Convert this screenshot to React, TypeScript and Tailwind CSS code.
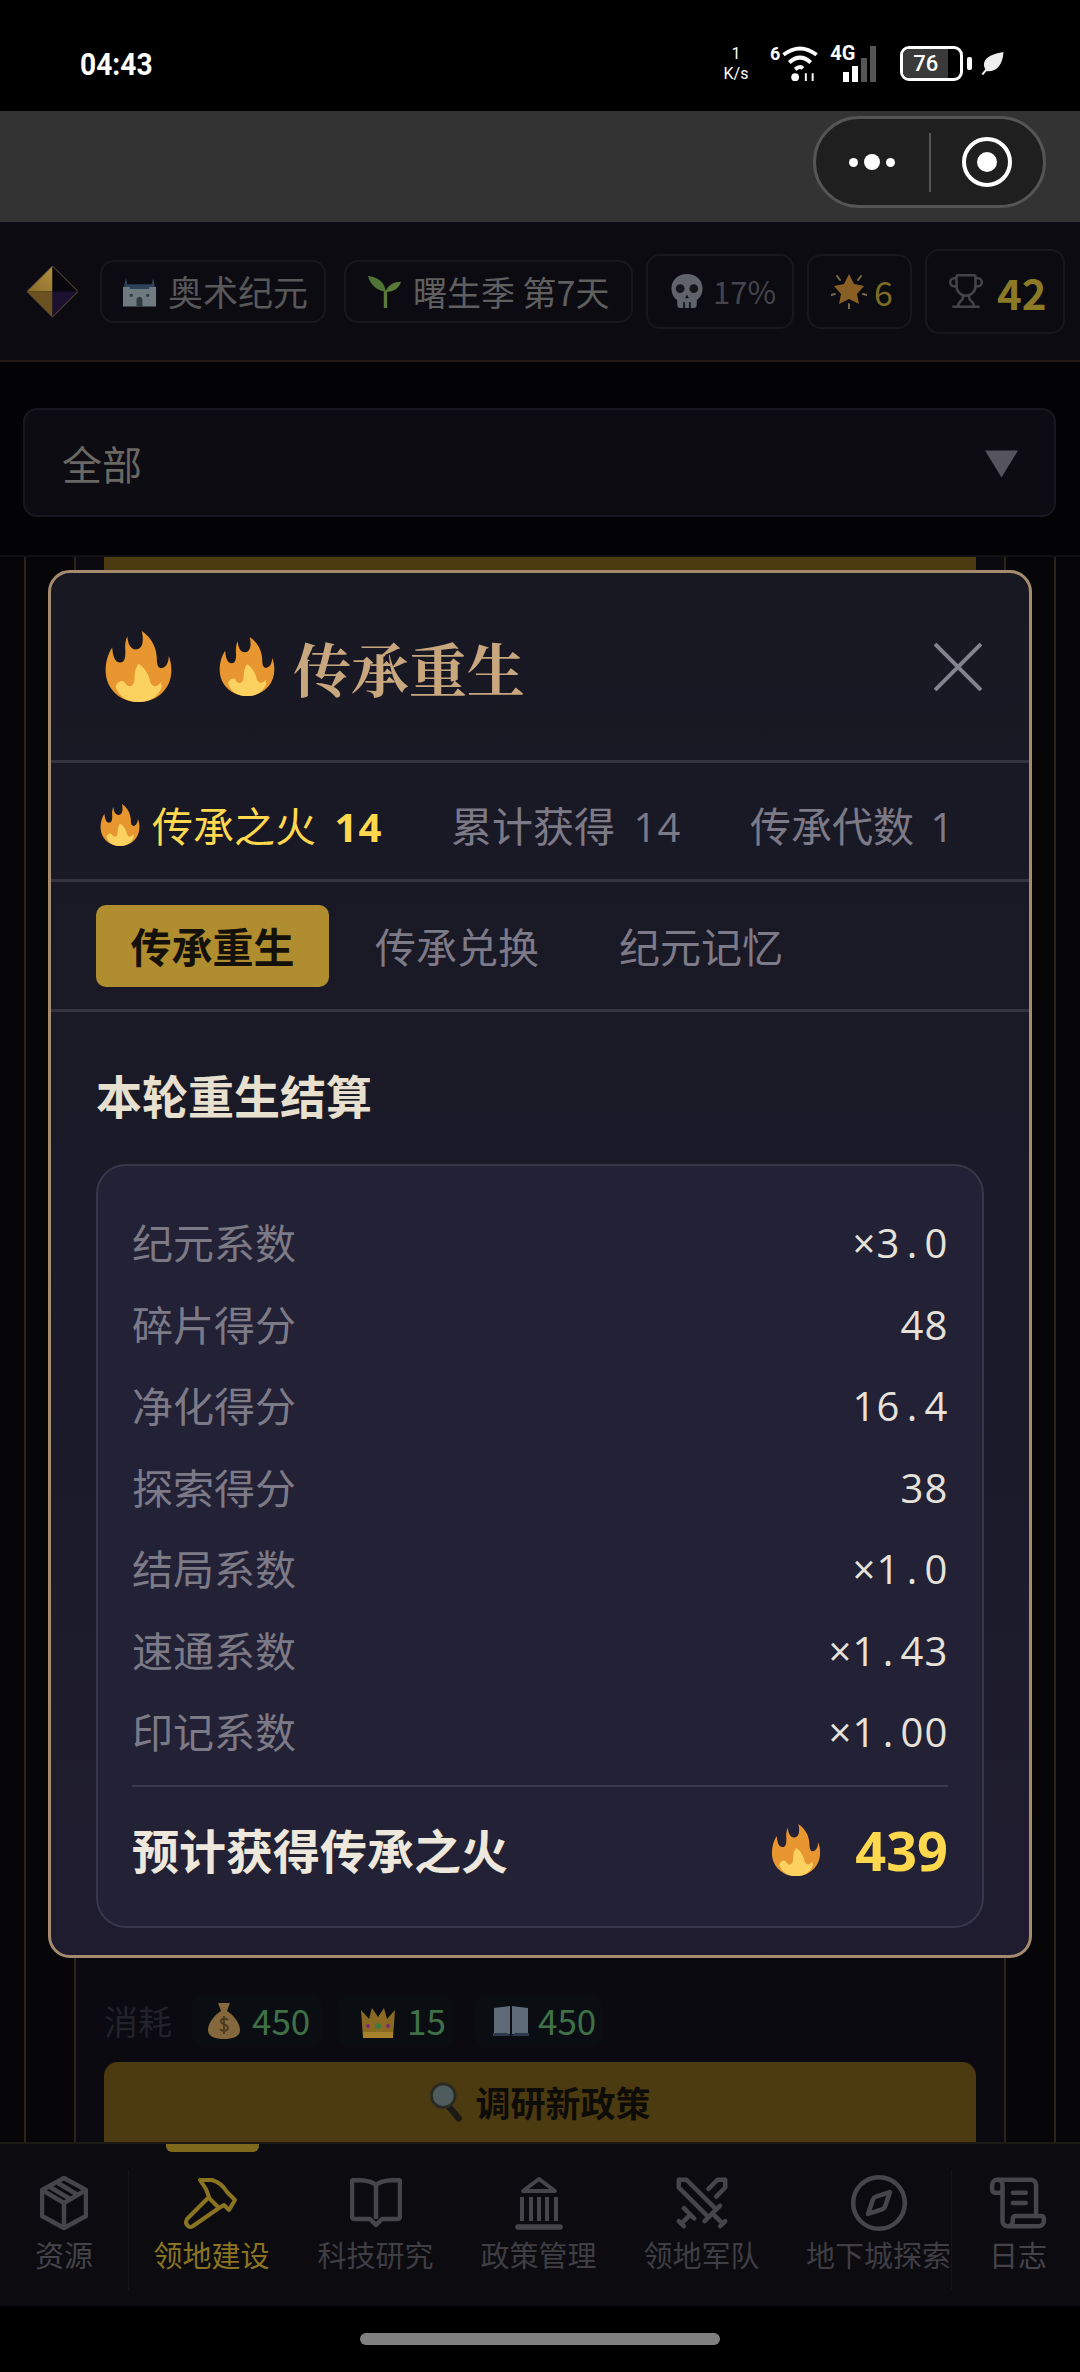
import { Compass, ScrollText, Swords, Trophy } from "lucide-react";

const Flame = ({ className }: { className: string }) => (
  <svg viewBox="0 0 100 108" className={className}>
    <path
      fill="#e8962f"
      d="M50 108C22 108 0 88 0 60C0 46 4 34 10 25C11 38 14 48 22 48C30 48 30 38 30 30C29 22 30 14 33 8C34 20 38 28 46 28C55 28 59 18 55 0C72 12 78 28 78 44C78 54 82 58 87 56C93 54 96 46 96 38C99 45 100 52 100 60C100 88 78 108 50 108Z"
    />
    <path
      fill="#fbd160"
      d="M50 108C32 108 20 100 15 84C20 74 28 74 30 80C36 88 44 84 44 72C44 62 46 56 50 50C58 54 66 66 68 78C72 86 78 86 84 78C84 80 86 84 85 86C80 100 68 108 50 108Z"
    />
  </svg>
);

const Castle = () => (
  <svg viewBox="0 0 36 32" className="w-[35px] h-[32px]">
    <path fill="#2d4258" d="M2 12L4 2L6 12ZM30 12L32 2L34 12ZM4 9H32V15H4Z" />
    <path fill="#6f7a80" d="M1 12H8V14H28V12H35V32H1Z" />
    <path fill="#2f3a42" d="M15 32V24Q18 20 21 24V32ZM8 19H11V22H8ZM25 19H28V22H25Z" />
  </svg>
);

const Sprout = () => (
  <svg viewBox="0 0 34 34" className="w-[33px] h-[33px]">
    <path fill="none" stroke="#5a7a3c" strokeWidth="3.5" d="M18 34V16" />
    <path fill="#4f7434" d="M18 17C18 8 10 2 0 1C2 9 8 16 18 17Z" />
    <path fill="#5a7a3c" d="M18 17C21 10 27 7 34 7C32 14 26 18 18 17Z" />
  </svg>
);

const Skull = () => (
  <svg viewBox="0 0 32 36" className="w-[32px] h-[35px]">
    <path fill="#60646a" d="M16 0C7 0 0 6 0 15C0 21 3 25 6 27V32Q6 35 9 35H23Q26 35 26 32V27C29 25 32 21 32 15C32 6 25 0 16 0Z" />
    <circle cx="9" cy="15" r="4.5" fill="#15151a" />
    <circle cx="23" cy="15" r="4.5" fill="#15151a" />
    <path fill="#15151a" d="M14 25L16 21L18 25ZM12 29H14V35H12ZM18 29H20V35H18Z" />
  </svg>
);

const Star = () => (
  <svg viewBox="0 0 36 36" className="w-[36px] h-[36px]">
    <path fill="#8a5f24" d="M18 1L23 11L33 13L26 21L28 31L18 26L8 31L10 21L3 13L13 11Z" />
    <path stroke="#7a6a48" strokeWidth="2" strokeLinecap="round" d="M6 3L9 7M30 3L27 7M0 22L4 21M36 22L32 21M18 31V36" />
  </svg>
);

const MoneyBag = () => (
  <svg viewBox="0 0 32 36" className="w-[32px] h-[36px] shrink-0">
    <path fill="#85683d" d="M10 0H22L19 8C27 13 32 21 32 27C32 33 26 36 16 36C6 36 0 33 0 27C0 21 5 13 13 8Z" />
    <path fill="none" stroke="#4d3b20" strokeWidth="2" d="M20 17C17 14 12 16 13 19C14 22 20 21 20 25C20 28 14 29 12 26M16 13V31" />
  </svg>
);

const Crown = () => (
  <svg viewBox="0 0 36 34" className="w-[36px] h-[34px] shrink-0">
    <path fill="#8a6a22" d="M1 6L9 15L12 4L18 13L24 4L27 15L35 6L33 34H3Z" />
    <path fill="#a8812c" d="M3 28H33V34H3Z" />
    <circle cx="8" cy="22" r="2" fill="#7a2a7a" />
    <circle cx="18" cy="22" r="3" fill="#3f7a3f" />
    <circle cx="28" cy="22" r="2" fill="#7a2a7a" />
  </svg>
);

const OpenBook = () => (
  <svg viewBox="0 0 36 30" className="w-[36px] h-[30px] shrink-0">
    <path fill="#5e6a78" d="M1 2L17 0V28H1ZM19 0L35 2V28H19Z" />
    <path fill="#2c3a4c" d="M0 27H14L18 30L22 27H36V30H0Z" />
  </svg>
);

const Magnifier = () => (
  <svg viewBox="0 0 36 44" className="w-[34px] h-[40px]">
    <path stroke="#1c1a14" strokeWidth="7" strokeLinecap="round" d="M22 28L32 40" />
    <circle cx="15" cy="15" r="13" fill="#4f5c5e" stroke="#2a2a24" strokeWidth="3" />
  </svg>
);

const Hammer = () => (
  <svg viewBox="0 0 60 56" className="w-[60px] h-[56px]" fill="none" stroke="#8a7422" strokeWidth="4" strokeLinejoin="round">
    <path d="M18 3H30C37 5 42 10 45 15L53 23L47 33L42 28L37 31L11 49C7 52 2 47 5 42L27 20L24 12Z" />
    <path d="M27 21L37 31" />
  </svg>
);

const CubeIcon = () => (
  <svg viewBox="0 0 48 54" className="w-[48px] h-[54px]" fill="none" stroke="#46454b" strokeWidth="4.5" strokeLinejoin="round">
    <path d="M24 2L46 14V40L24 52L2 40V14Z" />
    <path d="M2 14L24 27L46 14M24 27V52M18 7L38 19M10 11L30 23" />
  </svg>
);

const BookIcon = () => (
  <svg viewBox="0 0 52 50" className="w-[52px] h-[50px]" fill="none" stroke="#46454b" strokeWidth="4.5" strokeLinejoin="round">
    <path d="M26 7C22 3 14 2 4 2Q2 2 2 4V38Q2 41 5 41H20L26 47L32 41H47Q50 41 50 38V4Q50 2 48 2C38 2 30 3 26 7V41" />
  </svg>
);

const PillarIcon = () => (
  <svg viewBox="0 0 48 54" className="w-[48px] h-[54px]" fill="none" stroke="#46454b" strokeWidth="4">
    <path strokeLinejoin="round" d="M24 3L40 15H8Z" />
    <path d="M7 21V45M16 21V45M24 21V45M32 21V45M41 21V45" />
    <path strokeWidth="5.5" strokeLinecap="round" d="M3 51H45" />
  </svg>
);

const Wifi = () => (
  <svg viewBox="0 0 36 38" className="w-[36px] h-[37px]" fill="none" stroke="#fff" strokeWidth="4">
    <path d="M1 10Q18 -3 35 10M7 18Q18 8 29 18M13 25Q18 21 21 24" />
    <circle cx="13" cy="33" r="4" fill="#fff" stroke="none" />
    <path strokeWidth="2" d="M24 37V29M31 29V37" />
  </svg>
);

// plain zero monospace, the digits sit on a fixed 24px cell
const Mono = ({ value }: { value: string }) => (
  <span className="inline-flex text-[40px] [font-family:'Open_Sans',sans-serif]">
    {value.split("").map((ch, i) => (
      <span key={i} className="w-[24px] text-center">
        {ch}
      </span>
    ))}
  </span>
);

const rows = [
  ["纪元系数", "×3.0"],
  ["碎片得分", "48"],
  ["净化得分", "16.4"],
  ["探索得分", "38"],
  ["结局系数", "×1.0"],
  ["速通系数", "×1.43"],
  ["印记系数", "×1.00"],
];

const navItems = [
  { label: "科技研究", icon: <div className="h-[62px] flex items-center"><BookIcon /></div>, w: "w-[163px]" },
  { label: "政策管理", icon: <div className="h-[62px] flex items-center"><PillarIcon /></div>, w: "w-[163px]" },
  { label: "领地军队", icon: <Swords size={62} strokeWidth={1.75} />, w: "w-[163px]" },
  { label: "地下城探索", icon: <Compass size={62} strokeWidth={1.75} />, w: "w-[168px] pl-[23px]" },
];

export default function App() {
  return (
    <div className="relative w-[1080px] h-[2372px] overflow-hidden flex flex-col bg-black [font-family:'Noto_Sans_CJK_SC',sans-serif]">
      {/* status bar */}
      <div className="h-[111px] shrink-0 flex items-center text-white pt-[16px]">
        <span className="inline-block ml-[80px] w-[640px] text-[32px] font-bold leading-none origin-left scale-x-[0.88] [font-family:'Roboto',sans-serif]">04:43</span>
        <div className="flex flex-col items-center w-[32px] text-[16px] leading-[20px] [font-family:'Roboto',sans-serif]">
          <span>1</span>
          <span>K/s</span>
        </div>
        <span className="ml-[18px] text-[18px] font-bold self-center -mt-[20px] [font-family:'Roboto',sans-serif]">6</span>
        <div className="ml-[2px]"><Wifi /></div>
        <div className="relative ml-[12px] w-[55px] h-[37px] flex items-end gap-[3px] pl-[13px]">
          <span className="absolute left-0 -top-[2px] text-[20px] font-bold leading-none [font-family:'Roboto',sans-serif]">4G</span>
          <span className="w-[6px] h-[10px] bg-white" />
          <span className="w-[6px] h-[16px] bg-white" />
          <span className="w-[6px] h-[24px] bg-[#555]" />
          <span className="w-[6px] h-[36px] bg-[#555]" />
        </div>
        <div className="ml-[15px] w-[63px] h-[35px] rounded-[9px] border-[3px] border-white overflow-hidden flex items-center relative">
          <div className="absolute left-0 top-0 bottom-0 w-[45px] bg-[#3a3a3a]" />
          <span className="relative w-[45px] text-center text-[22px] font-medium leading-none [font-family:'Roboto',sans-serif]">76</span>
        </div>
        <span className="ml-[4px] w-[5px] h-[13px] rounded-[2px] bg-white" />
        <svg viewBox="0 0 24 24" className="ml-[8px] w-[24px] h-[23px]">
          <path fill="#eee" d="M24 0C23 14 17 21 6 20L3 24L1 23L5 18C0 8 10 2 24 0Z" />
        </svg>
      </div>

      {/* mini program bar */}
      <div className="h-[111px] shrink-0 bg-[#333333] flex items-start justify-end pr-[34px] pt-[5px]">
        <div className="w-[233px] h-[92px] rounded-full bg-[#1f1f1f] border-[3px] border-[#555555] flex items-center">
          <div className="flex-1 flex items-center justify-center gap-[6px]">
            <span className="w-[9px] h-[9px] rounded-full bg-white" />
            <span className="w-[16px] h-[16px] rounded-full bg-white" />
            <span className="w-[9px] h-[9px] rounded-full bg-white" />
          </div>
          <span className="w-[2px] h-[59px] bg-[#555555]" />
          <div className="flex-1 flex items-center justify-center">
            <div className="w-[50px] h-[50px] rounded-full border-[4px] border-white flex items-center justify-center">
              <span className="w-[20px] h-[20px] rounded-full bg-white" />
            </div>
          </div>
        </div>
      </div>

      {/* game header */}
      <div className="h-[140px] shrink-0 bg-[#0b0b11] border-b-[2px] border-[#211b16] flex items-center pl-[27px]">
        <svg viewBox="0 0 52 52" className="w-[51px] h-[51px] mr-[22px]">
          <defs>
            <linearGradient id="gemTop" x1="0" y1="1" x2="1" y2="0">
              <stop offset="0" stopColor="#8a6c2a" />
              <stop offset="1" stopColor="#b0903f" />
            </linearGradient>
          </defs>
          <path fill="url(#gemTop)" d="M26 0L0 26H26Z" />
          <path fill="#6b5220" d="M0 26L26 52V26Z" />
          <path fill="#07060c" d="M26 0L52 26H26Z" />
          <path fill="#1c1030" d="M26 52L52 26H26Z" />
          <path fill="none" stroke="#6d5a3a" strokeWidth="1" d="M26 0L52 26L26 52L0 26Z" />
        </svg>
        <div className="w-[226px] h-[63px] rounded-[14px] border-[2px] border-[#17171d] flex items-center pl-[20px] gap-[11px] text-[35px] text-[#58585a] mr-[18px]">
          <Castle />
          <span>奥术纪元</span>
        </div>
        <div className="w-[289px] h-[63px] rounded-[14px] border-[2px] border-[#17171d] flex items-center pl-[22px] gap-[12px] text-[34px] text-[#5f5f60] mr-[13px]">
          <Sprout />
          <span className="whitespace-nowrap">曙生季 第7天</span>
        </div>
        <div className="w-[148px] h-[75px] rounded-[14px] border-[2px] border-[#17171d] flex items-center pl-[23px] gap-[10px] text-[31px] text-[#46454b] mr-[13px]">
          <Skull />
          <span>17%</span>
        </div>
        <div className="w-[105px] h-[75px] rounded-[14px] border-[2px] border-[#17171d] flex items-center pl-[22px] gap-[7px] text-[34px] text-[#7d6c22] mr-[13px]">
          <Star />
          <span>6</span>
        </div>
        <div className="w-[140px] h-[85px] rounded-[14px] border-[2px] border-[#17171d] flex items-center pl-[20px] gap-[12px] text-[42px] font-bold text-[#8c7a26]">
          <Trophy size={38} strokeWidth={1.6} className="text-[#44434a]" />
          <span>42</span>
        </div>
      </div>

      {/* filter */}
      <div className="h-[193px] shrink-0 bg-[#030305] px-[23px] pt-[46px]">
        <div className="w-[1033px] h-[109px] rounded-[14px] border-[2px] border-[#17171f] bg-[#0c0c12] flex items-center justify-between pl-[37px] pr-[36px]">
          <span className="text-[40px] text-[#6a6864]">全部</span>
          <svg viewBox="0 0 34 28" className="w-[33px] h-[28px] mt-[2px]">
            <path fill="#55545c" d="M0 0H34L17 28Z" />
          </svg>
        </div>
      </div>

      {/* content behind modal */}
      <div className="flex-1 min-h-0 bg-[#060609] border-t-[2px] border-[#111114] px-[24px] flex">
        <div className="flex-1 border-x-[2px] border-[#2a241d] px-[48px] flex">
          <div className="flex-1 border-x-[2px] border-[#2a241d] bg-[#0a0a10] px-[28px] flex flex-col">
            <div className="h-[30px] bg-[#4c3a10]" />
            <div className="flex-1" />
            <div className="flex items-center mb-[16px] text-[35px] text-[#3f7048]">
              <span className="w-[88px] text-[#22222a] text-[34px]">消耗</span>
              <div className="flex items-center gap-[12px] w-[130px] h-[48px] pl-[16px] rounded-[8px] bg-[#0a0e12]">
                <MoneyBag />
                <span>450</span>
              </div>
              <div className="flex items-center gap-[11px] w-[117px] h-[48px] ml-[16px] pl-[22px] rounded-[8px] bg-[#0a0e12]">
                <Crown />
                <span>15</span>
              </div>
              <div className="flex items-center gap-[9px] w-[127px] h-[48px] ml-[20px] pl-[18px] rounded-[8px] bg-[#0a0e12]">
                <OpenBook />
                <span>450</span>
              </div>
            </div>
            <div className="h-[80px] rounded-t-[14px] bg-[#4c3a10] flex items-center justify-center gap-[12px] text-[35px] font-bold text-[#0e0c08]">
              <Magnifier />
              <span>调研新政策</span>
            </div>
          </div>
        </div>
      </div>

      {/* bottom nav */}
      <div className="relative h-[164px] shrink-0 bg-[#0b0b10] border-t-[2px] border-[#1c1a15] flex text-[29px] text-[#3f3e44]">
        <div className="w-[129px] h-[120px] mt-[26px] border-r-[1px] border-[#15151a] flex flex-col items-center text-[#44434a]">
          <div className="h-[66px] flex items-center"><CubeIcon /></div>
          <span className="-mt-[3px] whitespace-nowrap">资源</span>
        </div>
        <div className="w-[822px] overflow-hidden flex">
          <div className="relative w-[165px] shrink-0 flex flex-col items-center pt-[33px]">
            <span className="absolute top-0 left-[37px] w-[93px] h-[8px] rounded-b-[6px] bg-[#7d6a1d]" />
            <Hammer />
            <span className="text-[#8a7422] whitespace-nowrap">领地建设</span>
          </div>
          {navItems.map((item) => (
            <div key={item.label} className={`${item.w} shrink-0 flex flex-col items-center pt-[28px] text-[#46454b]`}>
              {item.icon}
              <span className="-mt-[1px] text-[#3f3e44] whitespace-nowrap">{item.label}</span>
            </div>
          ))}
        </div>
        <div className="flex-1 h-[120px] mt-[26px] border-l-[1px] border-[#15151a] flex flex-col items-center pl-[4px] text-[#46454b]">
          <ScrollText size={62} strokeWidth={1.75} className="mt-[2px]" />
          <span className="-mt-[1px] text-[#44434a] whitespace-nowrap">日志</span>
        </div>
      </div>

      {/* gesture bar */}
      <div className="h-[66px] shrink-0 bg-black flex justify-center pt-[27px]">
        <span className="w-[360px] h-[12px] rounded-full bg-[#808080]" />
      </div>

      {/* modal */}
      <div className="absolute left-[48px] top-[570px] w-[984px] h-[1388px] rounded-[22px] border-[3px] border-[#a68c6e] bg-linear-to-b from-[#181823] to-[#1e1c2e] flex flex-col">
        <div className="h-[190px] shrink-0 border-b-[3px] border-[#34333f] flex items-center pl-[54px] pr-[47px]">
          <Flame className="w-[67px] h-[71px] mr-[47px]" />
          <Flame className="w-[56px] h-[59px] mr-[18px]" />
          <span className="flex-1 text-[58px] font-bold text-[#c8a67e] leading-none [font-family:'Noto_Serif_CJK_SC','Noto_Sans_CJK_SC',serif]">传承重生</span>
          <svg viewBox="0 0 48 48" className="w-[48px] h-[48px]">
            <path stroke="#85828f" strokeWidth="4" d="M1 1L47 47M47 1L1 47" />
          </svg>
        </div>
        <div className="h-[119px] shrink-0 border-b-[3px] border-[#34333f] flex items-center pl-[49px] pt-[8px] text-[41px] text-[#7d7a88]">
          <Flame className="w-[40px] h-[42px] mr-[12px]" />
          <span className="text-[#ffd84d]">传承之火</span>
          <span className="ml-[18px] font-bold text-[#ffd84d]"><Mono value="14" /></span>
          <span className="ml-[69px]">累计获得</span>
          <span className="ml-[18px]"><Mono value="14" /></span>
          <span className="ml-[69px]">传承代数</span>
          <span className="ml-[16px]"><Mono value="1" /></span>
        </div>
        <div className="h-[130px] shrink-0 border-b-[3px] border-[#34333f] flex items-start pl-[45px] pt-[23px] gap-[12px] text-[41px] text-[#7d7a88]">
          <div className="w-[233px] h-[82px] rounded-[10px] bg-[#b08d2e] flex items-center justify-center font-bold text-[#14110a]">传承重生</div>
          <div className="w-[232px] h-[82px] flex items-center justify-center">传承兑换</div>
          <div className="w-[232px] h-[82px] flex items-center justify-center">纪元记忆</div>
        </div>
        <div className="flex-1 px-[45px]">
          <h2 className="mt-[49px] text-[46px] leading-[66px] font-bold text-[#e8e0cf]">本轮重生结算</h2>
          <div className="mt-[37px] h-[764px] rounded-[30px] border-[2px] border-[#38374a] bg-[#222135] px-[34px] pt-[35px]">
            {rows.map(([label, value]) => (
              <div key={label} className="h-[81.5px] flex items-center justify-between text-[41px]">
                <span className="text-[#7d7a88]">{label}</span>
                <span className="text-[#e6e2da]"><Mono value={value} /></span>
              </div>
            ))}
            <div className="mt-[13px] h-[2px] bg-[#3a394c]" />
            <div className="h-[126px] flex items-center justify-between">
              <span className="text-[47px] font-bold text-[#eee8dc]">预计获得传承之火</span>
              <div className="flex items-center gap-[34px]">
                <Flame className="w-[50px] h-[52px]" />
                <span className="text-[54px] font-bold leading-none text-[#ffd84d] [font-family:'Noto_Sans',sans-serif]">439</span>
              </div>
            </div>
          </div>
        </div>
      </div>
    </div>
  );
}
